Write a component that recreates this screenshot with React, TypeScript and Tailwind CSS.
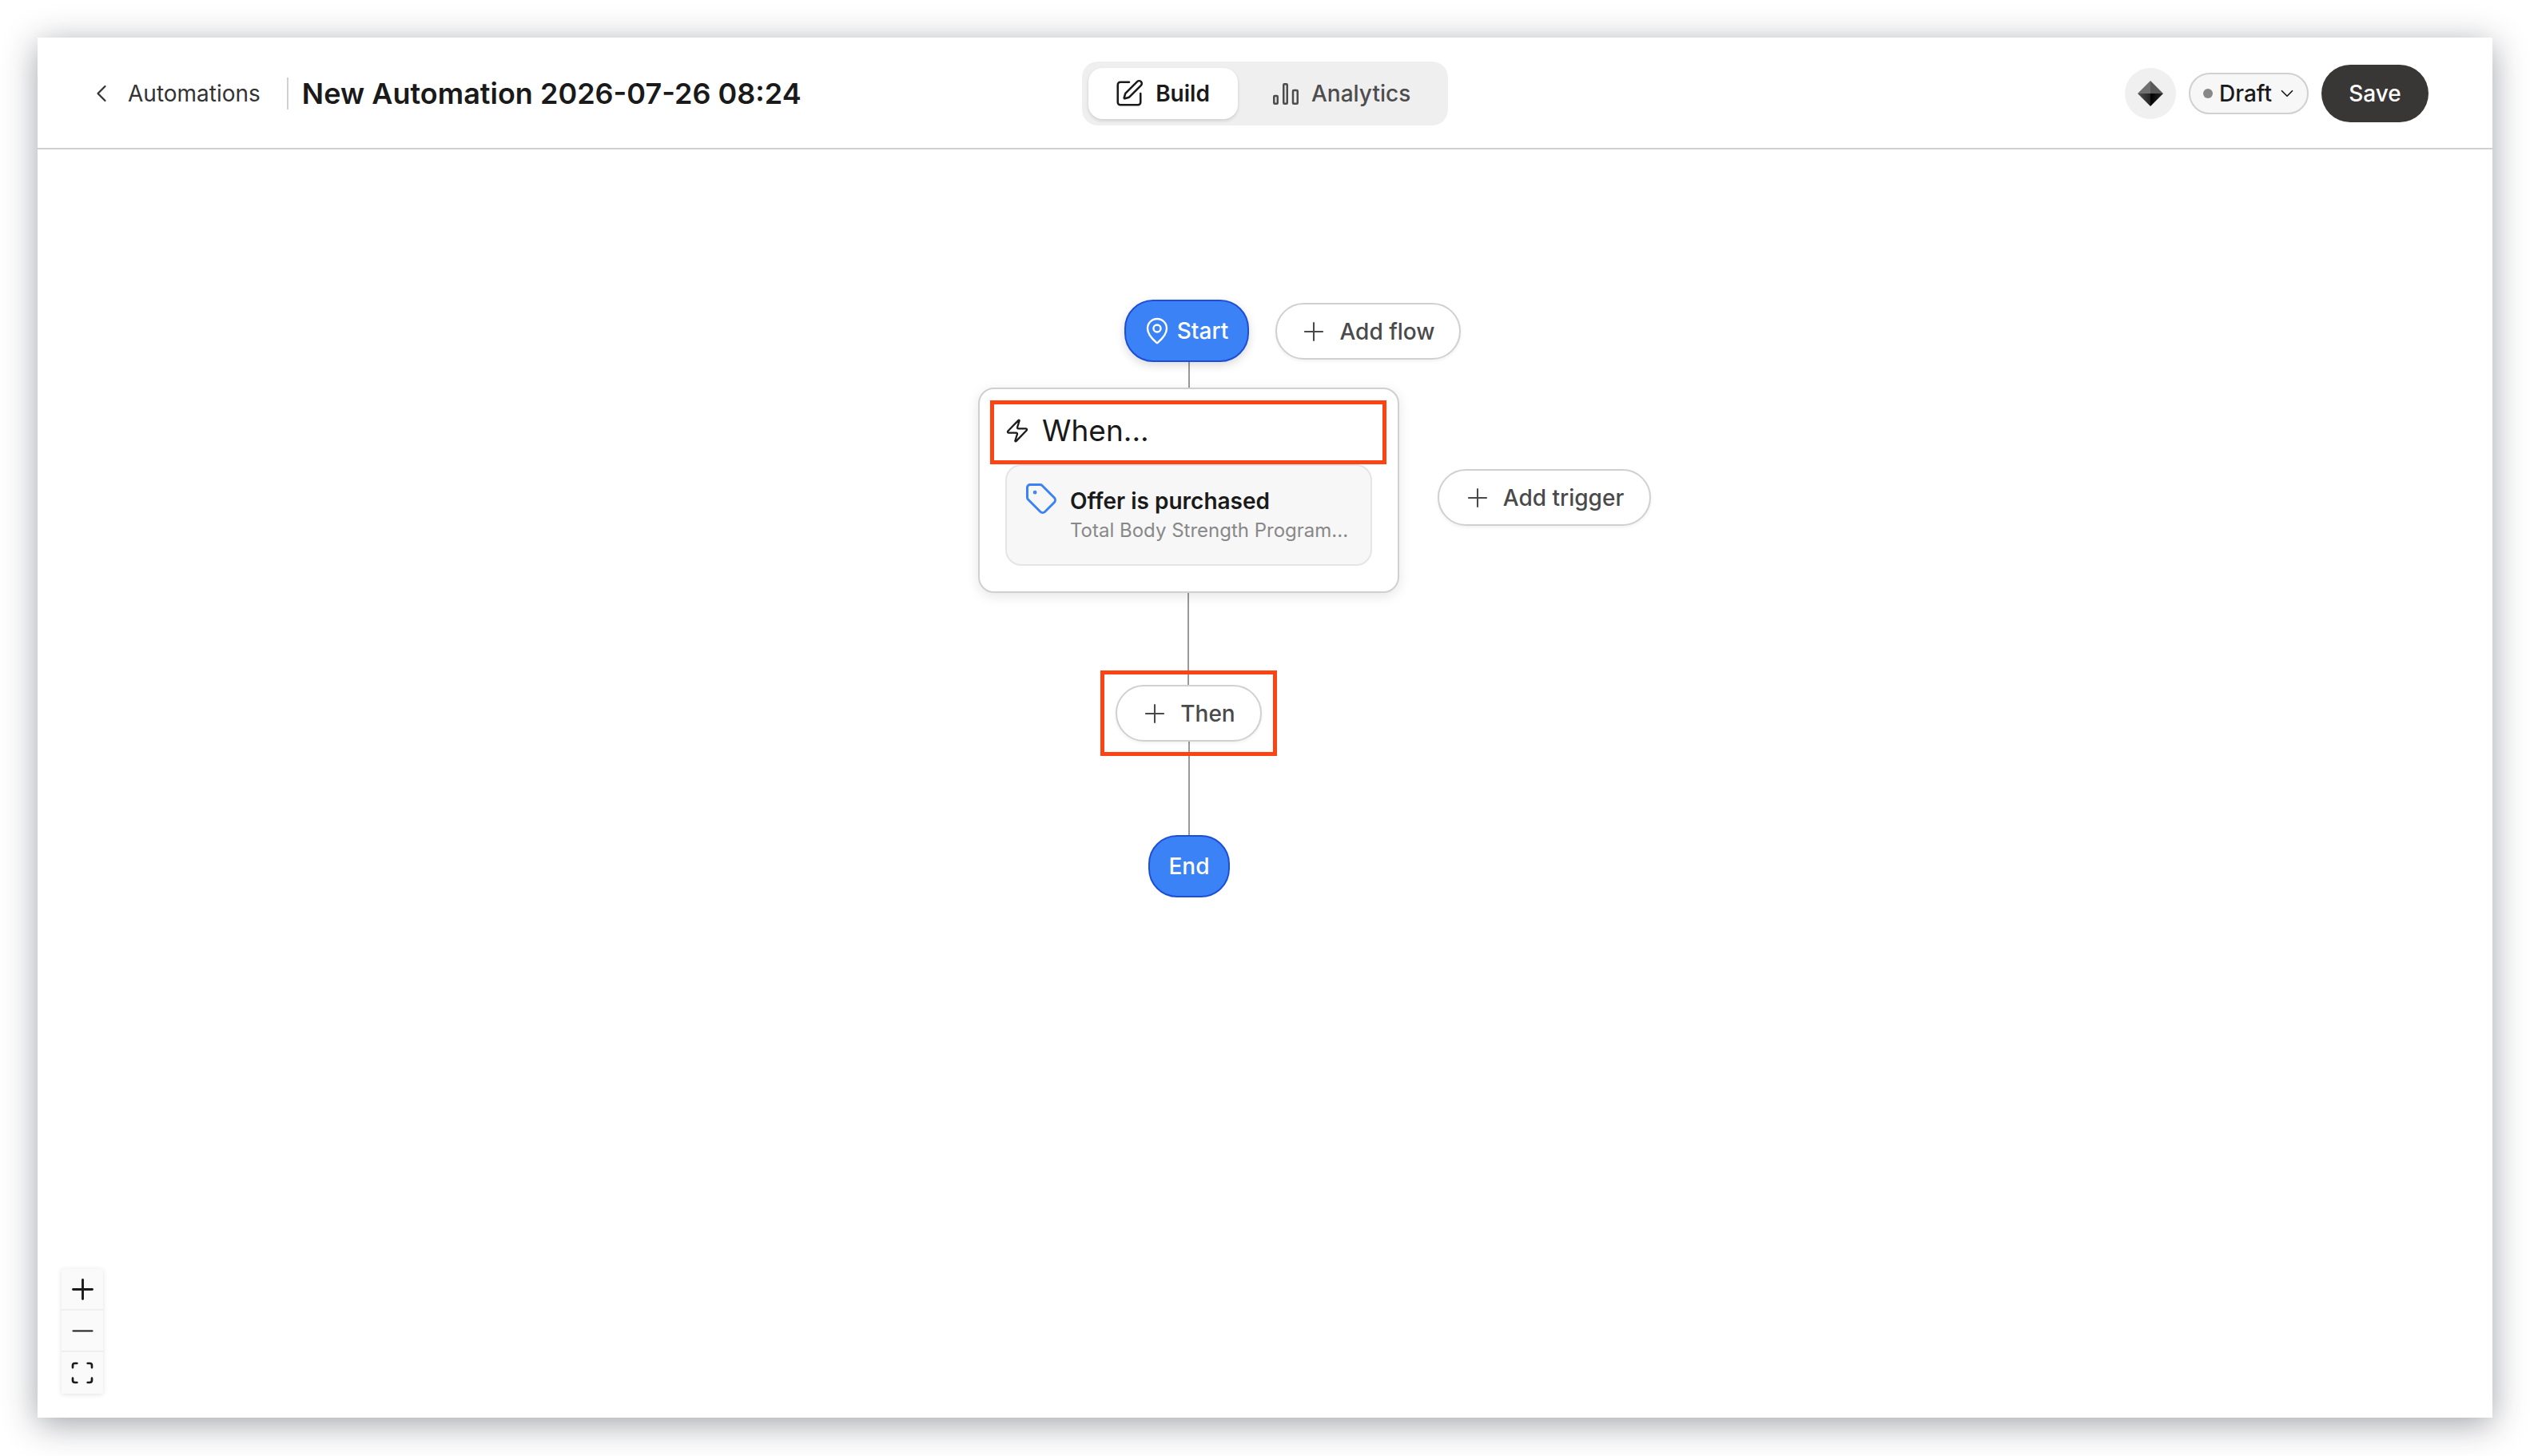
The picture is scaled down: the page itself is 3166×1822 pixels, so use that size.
import { ChevronDown, ChevronLeft, MapPin, Minus, Plus, Scan, SquarePen, Tag, Zap } from 'lucide-react'

function GhostPill({ label, className }: { label: string; className: string }) {
  return (
    <button className={`absolute flex h-[71px] items-center justify-center gap-[13px] rounded-full border-2 border-[#d0d0d0] bg-white pr-[3px] text-[28px] font-[450] text-[#4a4a4a] shadow-[0_2px_4px_rgba(0,0,0,0.06)] ${className}`}>
      <Plus size={38} strokeWidth={1.3} />
      {label}
    </button>
  )
}

function Gem() {
  return (
    <svg width="32" height="32" viewBox="0 0 32 32">
      <defs>
        <linearGradient id="gemBottomLeft" x1="0" y1="0" x2="1" y2="0">
          <stop offset="0" stopColor="#555" />
          <stop offset="1" stopColor="#222" />
        </linearGradient>
        <linearGradient id="gemBottomRight" x1="0" y1="0" x2="1" y2="0">
          <stop offset="0" stopColor="#000" />
          <stop offset="1" stopColor="#2a2a2a" />
        </linearGradient>
      </defs>
      <path d="M16 0 L0 16 H16 Z" fill="#707070" />
      <path d="M16 0 L32 16 H16 Z" fill="#5a5a5a" />
      <path d="M0 16 L16 32 V16 Z" fill="url(#gemBottomLeft)" />
      <path d="M32 16 L16 32 V16 Z" fill="url(#gemBottomRight)" />
    </svg>
  )
}

function BarsIcon() {
  return (
    <svg width="32" height="27" viewBox="0 0 32 27" fill="none" stroke="currentColor" strokeWidth="2.5">
      <rect x="1.25" y="16" width="4.5" height="9.75" rx="1" />
      <rect x="13.25" y="1.25" width="4.5" height="24.5" rx="1" />
      <rect x="25" y="9" width="5.75" height="16.75" rx="1" />
    </svg>
  )
}

export default function App() {
  return (
    <div className="h-[1822px] w-[3166px] overflow-hidden bg-white p-[47px] font-['Inter',sans-serif]">
      <div className="flex h-[1727px] w-[3072px] flex-col bg-white shadow-[0_8px_40px_rgba(30,35,50,0.42)]">
        {/* header */}
        <header className="grid h-[140px] shrink-0 grid-cols-[1fr_auto_1fr] items-center border-b-2 border-[#d0d0d0] px-[72px] pt-[2px]">
          <div className="flex items-center">
            <ChevronLeft size={36} strokeWidth={1.5} className="-ml-[10px] text-[#333]" />
            <span className="ml-[15px] text-[28px] text-[#333]">Automations</span>
            <div className="ml-[33px] h-[40px] w-[2px] bg-[#d0d0d0]" />
            <h1 className="ml-[17px] text-[36px] font-semibold text-[#1a1a1a]">New Automation 2026-07-26 08:24</h1>
          </div>
          <div className="flex h-[80px] w-[458px] items-center rounded-[20px] bg-[#efefef] px-[8px]">
            <button className="flex h-[64px] w-[187px] items-center justify-center gap-[14px] rounded-[18px] bg-white pr-[3px] text-[28px] font-semibold text-[#1a1a1a] shadow-[0_2px_4px_rgba(0,0,0,0.14)]">
              <SquarePen size={38} strokeWidth={1.6} />
              Build
            </button>
            <button className="ml-[44px] flex items-center gap-[16px] text-[28px] font-medium text-[#4d4d4d]">
              <BarsIcon />
              Analytics
            </button>
          </div>
          <div className="flex items-center justify-end pr-[8px]">
            <div className="flex h-[64px] w-[64px] items-center justify-center rounded-full bg-[#f0f0f0]">
              <Gem />
            </div>
            <button className="ml-[16px] flex h-[52px] w-[150px] items-center rounded-full border-2 border-[#d0d0d0] bg-[#f7f7f7] pl-[16px] text-[28px] font-[450] text-[#1a1a1a]">
              <span className="h-[12px] w-[12px] rounded-full bg-[#888]" />
              <span className="ml-[8px]">Draft</span>
              <ChevronDown size={26} strokeWidth={1.6} className="ml-[6px]" />
            </button>
            <button className="ml-[16px] h-[72px] w-[134px] rounded-full bg-[#383735] text-[28px] font-[450] text-white">Save</button>
          </div>
        </header>

        {/* flow canvas */}
        <main className="relative flex-1">
          <div className="absolute left-[1440px] top-[266px] h-[33px] w-[2px] bg-[#999]" />
          <div className="absolute left-[1439px] top-[555px] h-[115px] w-[2px] bg-[#999]" />
          <div className="absolute left-[1440px] top-[741px] h-[118px] w-[2px] bg-[#999]" />

          <button className="absolute left-[1360px] top-[188px] flex h-[78px] w-[156px] items-center justify-center gap-[7px] rounded-[36px] border-2 border-[#1d4ed8] bg-[#3b82f6] pr-[3px] text-[28px] font-[450] text-white shadow-[0_4px_12px_rgba(0,0,0,0.15)]">
            <MapPin size={36} strokeWidth={1.6} />
            Start
          </button>
          <GhostPill label="Add flow" className="left-[1549px] top-[192px] w-[232px]" />

          <div className="absolute left-[1177px] top-[298px] h-[257px] w-[527px] rounded-[20px] border-2 border-[#d0d0d0] bg-white px-[32px] pt-[14px] shadow-[0_4px_16px_rgba(0,0,0,0.1)]">
            <div className="mb-[4px] flex h-[76px] items-center gap-[15px]">
              <Zap size={32} strokeWidth={1.7} className="-ml-[1px] text-[#1a1a1a]" />
              <span className="text-[37px] font-normal text-[#1a1a1a]">When...</span>
            </div>
            <div className="flex h-[127px] w-[459px] gap-[15px] rounded-[20px] border-2 border-[#e5e5e5] bg-[#f7f7f7] pl-[24px] pt-[26px]">
              <Tag size={42} strokeWidth={1.7} className="-ml-[2px] -mt-[6px] text-[#3b82f6]" />
              <div>
                <div className="text-[28px] font-semibold leading-[36px] text-[#1a1a1a]">Offer is purchased</div>
                <div className="mt-[3px] text-[24px] leading-[32px] text-[#888]">Total Body Strength Program...</div>
              </div>
            </div>
          </div>

          <GhostPill label="Add trigger" className="left-[1752px] top-[400px] w-[267px]" />
          <GhostPill label="Then" className="left-[1349px] top-[670px] w-[183px]" />

          <button className="absolute left-[1390px] top-[858px] h-[78px] w-[102px] rounded-[36px] border-2 border-[#1d4ed8] bg-[#3b82f6] text-[28px] font-[450] text-white">End</button>

          {/* annotation boxes */}
          <div className="absolute left-[1192px] top-[314px] h-[80px] w-[496px] border-[5px] border-[#fc4314]" />
          <div className="absolute left-[1330px] top-[652px] h-[107px] w-[221px] border-[5px] border-[#fc4314]" />

          {/* zoom controls */}
          <div className="absolute bottom-[30px] left-[30px] flex w-[52px] flex-col gap-[2px] bg-[#efefef] text-[#1a1a1a] shadow-[0_1px_6px_rgba(0,0,0,0.12)]">
            <button className="flex h-[50px] items-center justify-center bg-[#fafafa]"><Plus size={41} strokeWidth={1.7} /></button>
            <button className="flex h-[50px] items-center justify-center bg-[#fafafa]"><Minus size={41} strokeWidth={1.3} /></button>
            <button className="flex h-[52px] items-center justify-center bg-[#fafafa]"><Scan size={32} strokeWidth={2} /></button>
          </div>
        </main>
      </div>
    </div>
  )
}
